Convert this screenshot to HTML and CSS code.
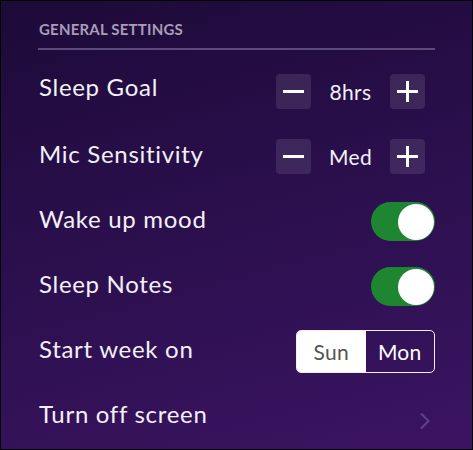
FILE: index.html
```html
<!DOCTYPE html>
<html>
<head>
<meta charset="utf-8">
<link rel="stylesheet" href="styles.css">
</head>
<body>
<div class="screen">
  <div class="section-title">GENERAL SETTINGS</div>
  <div class="rule"></div>
  <div class="rows">
    <div class="row">
      <span class="label label-first">Sleep Goal</span>
      <div class="stepper">
        <span class="step-btn"><svg width="21" height="21" viewBox="0 0 21 21"><rect x="0" y="9" width="21" height="3" fill="#fff"/></svg></span>
        <span class="step-val">8hrs</span>
        <span class="step-btn"><svg width="21" height="21" viewBox="0 0 21 21"><rect x="0" y="9" width="21" height="3" fill="#fff"/><rect x="9" y="0" width="3" height="21" fill="#fff"/></svg></span>
      </div>
    </div>
    <div class="row">
      <span class="label">Mic Sensitivity</span>
      <div class="stepper">
        <span class="step-btn"><svg width="21" height="21" viewBox="0 0 21 21"><rect x="0" y="9" width="21" height="3" fill="#fff"/></svg></span>
        <span class="step-val">Med</span>
        <span class="step-btn"><svg width="21" height="21" viewBox="0 0 21 21"><rect x="0" y="9" width="21" height="3" fill="#fff"/><rect x="9" y="0" width="3" height="21" fill="#fff"/></svg></span>
      </div>
    </div>
    <div class="row">
      <span class="label">Wake up mood</span>
      <span class="toggle"><span class="knob"></span></span>
    </div>
    <div class="row">
      <span class="label">Sleep Notes</span>
      <span class="toggle"><span class="knob"></span></span>
    </div>
    <div class="row">
      <span class="label">Start week on</span>
      <div class="segment">
        <span class="seg seg-on">Sun</span>
        <span class="seg">Mon</span>
      </div>
    </div>
    <div class="row">
      <span class="label">Turn off screen</span>
      <svg class="chevron" width="12" height="18" viewBox="0 0 12 18"><path d="M2 1.5 L9.5 9 L2 16.5" fill="none" stroke="#5e4385" stroke-width="2"/></svg>
    </div>
  </div>
</div>
</body>
</html>
```

FILE: styles.css
```css
html, body {
  margin: 0;
  padding: 0;
}
body {
  width: 473px;
  height: 450px;
  overflow: hidden;
  font-family: Lato, "Open Sans", sans-serif;
  color: #fff;
}
.screen {
  box-sizing: border-box;
  width: 473px;
  height: 450px;
  border: 1px solid #000;
  background: linear-gradient(165deg, #1d0a38 0%, #2a0f4c 45%, #3b1462 100%);
  padding: 0 37px 0 37px;
  display: flex;
  flex-direction: column;
}
.section-title {
  font-size: 15px;
  font-weight: 700;
  color: #a99cb8;
  letter-spacing: 0.2px;
  line-height: 18px;
  box-sizing: border-box;
  padding-left: 1px;
  height: 50px;
  padding-top: 19px;
}
.rule {
  height: 2px;
  background: #5d4a7c;
  margin-bottom: 9px;
}
.rows {
  display: flex;
  flex-direction: column;
}
.row {
  height: 65px;
  display: flex;
  align-items: center;
  justify-content: space-between;
}
.label {
  font-size: 24px;
  letter-spacing: 0.7px;
  line-height: 30px;
  padding-bottom: 6px;
  padding-left: 1px;
  color: #f4f0f8;
}
.label-first {
  padding-bottom: 9px;
}
.stepper {
  display: flex;
  align-items: center;
  margin-right: 10px;
}
.step-btn {
  width: 35px;
  height: 35px;
  border-radius: 4px;
  background: rgba(255, 255, 255, 0.1);
  display: flex;
  align-items: center;
  justify-content: center;
}
.step-val {
  width: 79px;
  text-align: center;
  font-size: 21px;
  letter-spacing: 0.3px;
  line-height: 26px;
  color: #f4f0f8;
}
.toggle {
  width: 64px;
  height: 39px;
  border-radius: 20px;
  background: #1e8531;
  display: flex;
  align-items: center;
  justify-content: flex-end;
  padding-right: 1px;
  box-sizing: border-box;
}
.knob {
  width: 36px;
  height: 36px;
  border-radius: 50%;
  background: #fff;
}
.segment {
  width: 139px;
  height: 43px;
  box-sizing: border-box;
  border: 1.5px solid #f2eef6;
  border-radius: 5px;
  display: flex;
  overflow: hidden;
}
.seg {
  flex: 1;
  display: flex;
  align-items: center;
  justify-content: center;
  font-size: 21px;
  letter-spacing: 0.3px;
  color: #fff;
}
.seg-on {
  background: #fff;
  color: #555;
}
.chevron {
  margin-right: 4px;
  margin-top: 8px;
}
```
